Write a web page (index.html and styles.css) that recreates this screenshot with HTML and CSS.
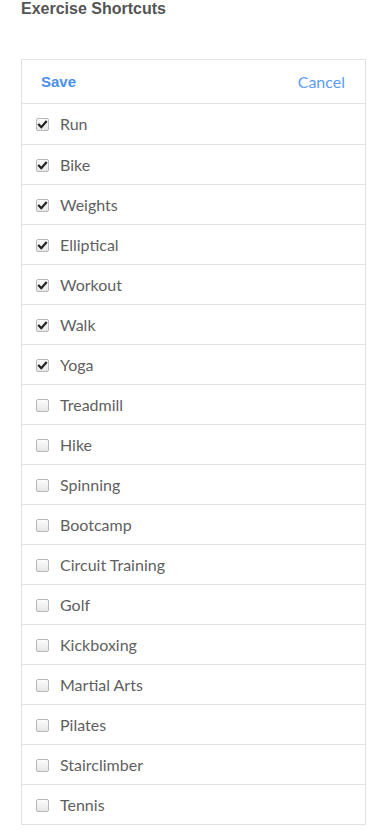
FILE: index.html
```html
<!DOCTYPE html>
<html>
<head>
<meta charset="utf-8">
<link rel="stylesheet" href="styles.css">
</head>
<body>
<div class="page">
  <h1 class="title">Exercise Shortcuts</h1>
  <div class="panel">
    <div class="panel-head">
      <a class="save">Save</a>
      <a class="cancel">Cancel</a>
    </div>
    <ul class="list">
      <li class="row"><span class="box on"><svg viewBox="0 0 13 13"><path d="M3 6.8 L5.3 9.2 L10 3.8" /></svg></span><span class="label">Run</span></li>
      <li class="row"><span class="box on"><svg viewBox="0 0 13 13"><path d="M3 6.8 L5.3 9.2 L10 3.8" /></svg></span><span class="label">Bike</span></li>
      <li class="row"><span class="box on"><svg viewBox="0 0 13 13"><path d="M3 6.8 L5.3 9.2 L10 3.8" /></svg></span><span class="label">Weights</span></li>
      <li class="row"><span class="box on"><svg viewBox="0 0 13 13"><path d="M3 6.8 L5.3 9.2 L10 3.8" /></svg></span><span class="label">Elliptical</span></li>
      <li class="row"><span class="box on"><svg viewBox="0 0 13 13"><path d="M3 6.8 L5.3 9.2 L10 3.8" /></svg></span><span class="label">Workout</span></li>
      <li class="row"><span class="box on"><svg viewBox="0 0 13 13"><path d="M3 6.8 L5.3 9.2 L10 3.8" /></svg></span><span class="label">Walk</span></li>
      <li class="row"><span class="box on"><svg viewBox="0 0 13 13"><path d="M3 6.8 L5.3 9.2 L10 3.8" /></svg></span><span class="label">Yoga</span></li>
      <li class="row"><span class="box"></span><span class="label">Treadmill</span></li>
      <li class="row"><span class="box"></span><span class="label">Hike</span></li>
      <li class="row"><span class="box"></span><span class="label">Spinning</span></li>
      <li class="row"><span class="box"></span><span class="label">Bootcamp</span></li>
      <li class="row"><span class="box"></span><span class="label">Circuit Training</span></li>
      <li class="row"><span class="box"></span><span class="label">Golf</span></li>
      <li class="row"><span class="box"></span><span class="label">Kickboxing</span></li>
      <li class="row"><span class="box"></span><span class="label">Martial Arts</span></li>
      <li class="row"><span class="box"></span><span class="label">Pilates</span></li>
      <li class="row"><span class="box"></span><span class="label">Stairclimber</span></li>
      <li class="row"><span class="box"></span><span class="label">Tennis</span></li>
    </ul>
  </div>
</div>
</body>
</html>
```
FILE: styles.css
```css
* { box-sizing: border-box; }
html, body { margin: 0; padding: 0; background: #fff; }
body { font-family: "Liberation Sans", Arial, sans-serif; color: #555; }
.page { padding: 0 14px 0 21px; }
.title {
  margin: 0;
  font-size: 16px;
  font-weight: bold;
  line-height: 18px;
  color: #555;
  height: 59px;
}
.panel {
  border: 1px solid #e2e2e2;
  width: 345px;
}
.panel-head {
  height: 44px;
  display: flex;
  align-items: center;
  justify-content: space-between;
  padding: 0 20px 0 19px;
  border-bottom: 1px solid #e2e2e2;
  font-size: 15px;
}
.save { color: #4a8ff0; font-weight: bold; font-family: "Liberation Sans", Arial, sans-serif; }
.cancel { color: #5d9cf2; font-family: Lato, "Liberation Sans", sans-serif; font-size: 16px; }
.list { list-style: none; margin: 0; padding: 0; }
.row {
  height: 40px;
  display: flex;
  align-items: center;
  padding-left: 14px;
  border-top: 1px solid #e2e2e2;
  font-family: Lato, "Liberation Sans", sans-serif;
  font-size: 16px;
  color: #5f5f5f;
}
.row:first-child { border-top: none; }
.box {
  width: 13px;
  height: 13px;
  border: 1px solid #b8b8b8;
  border-radius: 2px;
  background: linear-gradient(#fcfcfc, #e6e6e6);
  margin-right: 11px;
  margin-top: 1px;
  display: flex;
  align-items: center;
  justify-content: center;
  flex: none;
}
.box svg { width: 13px; height: 13px; flex: none; }
.box svg path { fill: none; stroke: #222; stroke-width: 2.2; stroke-linecap: square; }
.label { line-height: 20px; }
```
